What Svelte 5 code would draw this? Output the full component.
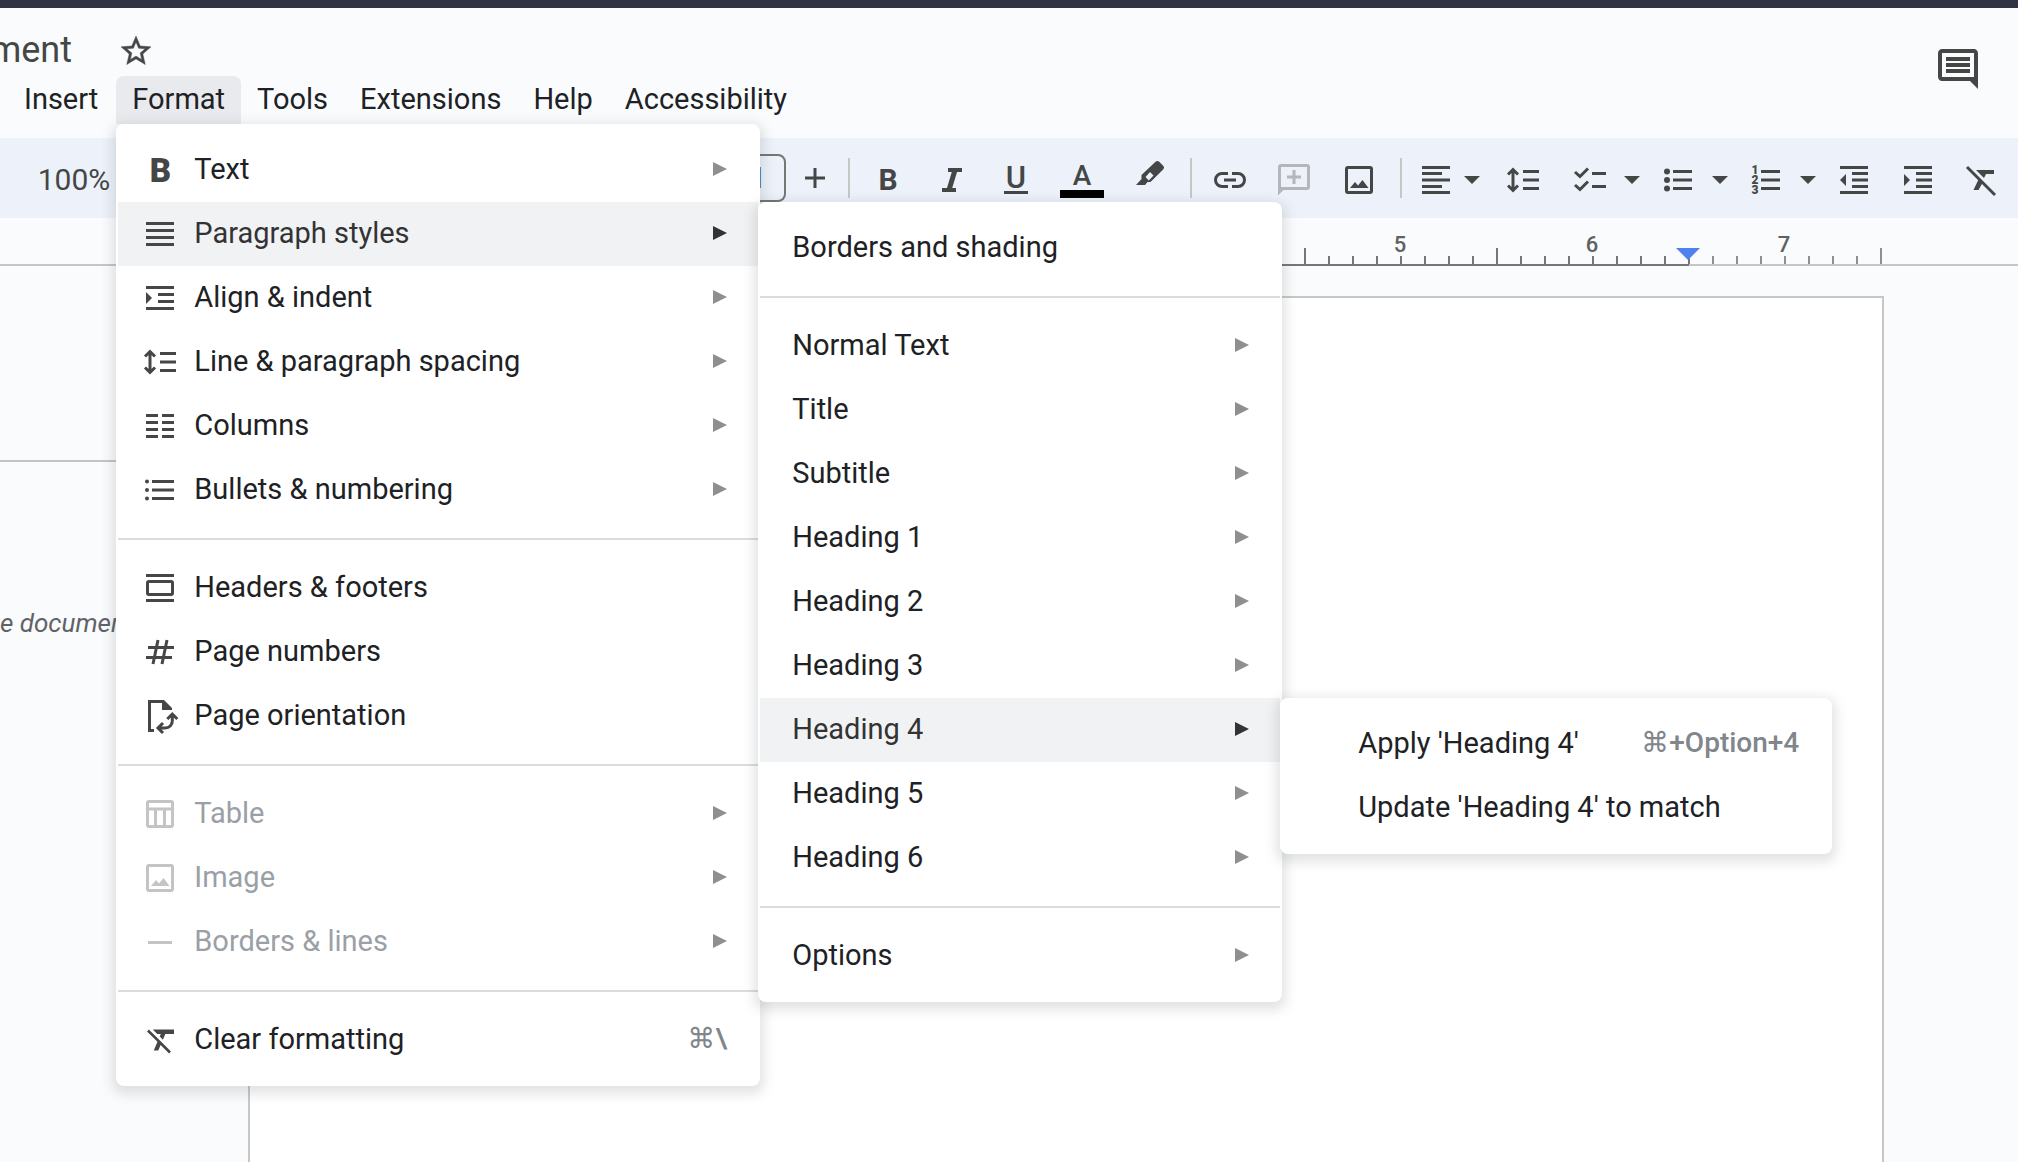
<script>
  const formatMenu = [
    { label: 'Text', icon: 'bold', arrow: true },
    { label: 'Paragraph styles', icon: 'paragraph', arrow: true, open: true },
    { label: 'Align & indent', icon: 'alignIndent', arrow: true },
    { label: 'Line & paragraph spacing', icon: 'spacing', arrow: true },
    { label: 'Columns', icon: 'columns', arrow: true },
    { label: 'Bullets & numbering', icon: 'bullets', arrow: true },
    null,
    { label: 'Headers & footers', icon: 'headers' },
    { label: 'Page numbers', icon: 'hash' },
    { label: 'Page orientation', icon: 'orientation' },
    null,
    { label: 'Table', icon: 'table', arrow: true, disabled: true },
    { label: 'Image', icon: 'image', arrow: true, disabled: true },
    { label: 'Borders & lines', icon: 'line', arrow: true, disabled: true },
    null,
    { label: 'Clear formatting', icon: 'clear', shortcut: '⌘\\' },
  ];

  const styleMenu = [
    { label: 'Borders and shading' },
    null,
    { label: 'Normal Text', arrow: true },
    { label: 'Title', arrow: true },
    { label: 'Subtitle', arrow: true },
    { label: 'Heading 1', arrow: true },
    { label: 'Heading 2', arrow: true },
    { label: 'Heading 3', arrow: true },
    { label: 'Heading 4', arrow: true, open: true },
    { label: 'Heading 5', arrow: true },
    { label: 'Heading 6', arrow: true },
    null,
    { label: 'Options', arrow: true },
  ];

  const headingMenu = [
    { label: "Apply 'Heading 4'", shortcut: '⌘+Option+4' },
    { label: "Update 'Heading 4' to match" },
  ];

  // Ruler: 192px to the inch, one tick each eighth, starting one inch left of zero.
  const ticks = Array.from({ length: 69 }, (_, i) => ({
    x: i * 24 + 1,
    half: i % 8 === 4,
    outside: i < 8 || i > 60,
  }));
  const inches = [5, 6, 7];
</script>

{#snippet arrow()}
  <svg class="arrow" width="14" height="14" viewBox="0 0 14 14" aria-hidden="true"><path d="M0 0l14 7-14 7z" /></svg>
{/snippet}

{#snippet caret()}
  <svg width="16" height="40" viewBox="0 0 16 40" aria-hidden="true"><path d="M0 18h16l-8 8z" fill="currentColor" /></svg>
{/snippet}

{#snippet menuIcon(name)}
  <svg class="line-icon" width="40" height="40" viewBox="0 0 40 40" aria-hidden="true">
    {#if name === 'bold'}
      <text class="black" x="20.5" y="32" font-size="33">B</text>
    {:else if name === 'paragraph'}
      <path d="M6 9.5h28M6 16.5h28M6 23.5h28M6 30.5h28" />
    {:else if name === 'alignIndent'}
      <path d="M6 9.5h28M18 16.5h16M18 23.5h16M6 30.5h28" />
      <path class="solid" d="M6 14l6 6-6 6z" />
    {:else if name === 'spacing'}
      <path d="M10 10v20M5 14.5l5-5 5 5M5 25.5l5 5 5-5M20 11.5h16M20 20h16M20 28.5h16" />
    {:else if name === 'columns'}
      <path d="M6 9.5h12M22 9.5h12M6 16.5h12M22 16.5h12M6 23.5h12M22 23.5h12M6 30.5h12M22 30.5h12" />
    {:else if name === 'bullets'}
      <path d="M12 11.5h22M12 20h22M12 28.5h22" />
      <g class="solid"><circle cx="7" cy="11.5" r="2" /><circle cx="7" cy="20" r="2" /><circle cx="7" cy="28.5" r="2" /></g>
    {:else if name === 'headers'}
      <path d="M6 7.5h28M6 32.5h28" />
      <rect x="7.5" y="13.5" width="25" height="13" rx="1.5" />
    {:else if name === 'hash'}
      <path d="M8 15.5h26M6 25.5h26M18 8l-5 24M27 8l-5 24" />
    {:else if name === 'orientation'}
      <path d="M14 34.5H9.5v-29H24M32.3 20v5a7 7 0 0 1-7 7H19M27.3 23l5-5 5 5M23 27l-5 5 5 5" />
      <path class="solid" d="M22 4h2l8 8v2H22z" />
    {:else if name === 'table'}
      <rect x="7.5" y="7.5" width="25" height="25" rx="1.5" />
      <path d="M7 15h26M15.5 15v18M24.5 15v18" />
    {:else if name === 'image'}
      <rect x="7.5" y="7.5" width="25" height="25" rx="1.5" />
      <path class="solid" d="M11 28l5-6 3 3.5 4.5-5.5 6 8z" />
    {:else if name === 'line'}
      <path d="M8 20.5h24" />
    {:else if name === 'clear'}
      <path class="solid" transform="translate(4 2) scale(1.5)" d="M3.27 5L2 6.27l6.97 6.97L6.5 19h3l1.57-3.66L16.73 21 18 19.73 3.55 5.27 3.27 5zM6 5v.18L8.82 8h2.4l-.72 1.68 2.1 2.1L14.21 8H20V5H6z" />
    {/if}
  </svg>
{/snippet}

{#snippet menu(items, level)}
  <ul class="menu level-{level}" role="menu">
    {#each items as item}
      {#if item}
        <li role="none">
          <button class="item" class:open={item.open} disabled={item.disabled} role="menuitem">
            {#if item.icon}{@render menuIcon(item.icon)}{/if}
            <span class="label">{item.label}</span>
            {#if item.shortcut}<span class="shortcut">{item.shortcut}</span>{/if}
            {#if item.arrow}{@render arrow()}{/if}
          </button>
          {#if item.open && level === 1}{@render menu(styleMenu, 2)}{/if}
          {#if item.open && level === 2}{@render menu(headingMenu, 3)}{/if}
        </li>
      {:else}
        <li class="separator" role="separator"></li>
      {/if}
    {/each}
  </ul>
{/snippet}

<div class="app">
  <header>
    <div class="heading">
      <div class="title-row">
        <div class="title"><span>ment</span></div>
        <button class="star" aria-label="Star">
          <svg width="36" height="36" viewBox="0 0 24 24"><path fill="currentColor" stroke="currentColor" stroke-width=".3" d="M22 9.24l-7.19-.62L12 2 9.19 8.63 2 9.24l5.46 4.73L5.82 21 12 17.27 18.18 21l-1.63-7.03L22 9.24zM12 15.4l-3.76 2.27 1-4.28-3.32-2.88 4.38-.38L12 6.1l1.71 4.04 4.38.38-3.32 2.88 1 4.28L12 15.4z" /></svg>
        </button>
      </div>
      <nav class="menubar">
        <button class="insert">Insert</button>
        <div class="menu-anchor">
          <button class="active">Format</button>
          {@render menu(formatMenu, 1)}
        </div>
        <button>Tools</button>
        <button>Extensions</button>
        <button>Help</button>
        <button>Accessibility</button>
      </nav>
    </div>
    <button class="comments" aria-label="Open comment history">
      <svg width="48" height="48" viewBox="0 0 24 24"><path fill="currentColor" d="M21.99 4c0-1.1-.89-2-1.99-2H4c-1.1 0-2 .9-2 2v12c0 1.1.9 2 2 2h14l4 4-.01-18zM20 4v12H4V4h16zM6 12h12v2H6zm0-3h12v2H6zm0-3h12v2H6z" /></svg>
    </button>
  </header>

  <div class="toolbar" role="toolbar" aria-label="Formatting">
    <button class="zoom">100%</button>
    <input class="size" aria-label="Font size" value="11" />
    <button class="plus" aria-label="Increase font size">
      <svg class="line-icon" width="20" height="40" viewBox="0 0 20 40"><path d="M0 20h20M10 10v20" /></svg>
    </button>
    <span class="divider"></span>
    <button class="tool" aria-label="Bold">
      <svg class="line-icon" width="40" height="40" viewBox="0 0 40 40"><text class="bold" x="20" y="32" font-size="30">B</text></svg>
    </button>
    <button class="tool" aria-label="Italic">
      <svg class="line-icon" width="40" height="40" viewBox="0 0 40 40"><path d="M16 12h14M10 32h14" stroke-width="4" /><path d="M23 12l-6 20" stroke-width="5" /></svg>
    </button>
    <button class="tool" aria-label="Underline">
      <svg class="line-icon" width="40" height="40" viewBox="0 0 40 40"><text class="medium" x="20" y="30" font-size="31">U</text><path d="M8 34.5h24" /></svg>
    </button>
    <button class="tool wide" aria-label="Text color">
      <svg class="line-icon" width="44" height="40" viewBox="0 0 44 40"><text class="medium" x="22" y="27" font-size="28">A</text><path class="swatch" d="M0 32h44v8H0z" /></svg>
    </button>
    <button class="tool wide" aria-label="Highlight color">
      <svg class="line-icon" width="40" height="40" viewBox="0 0 40 40"><path class="solid" fill-rule="evenodd" d="M25.8 3.6q1.6-1.4 3.2 0l4.4 4.4q1.4 1.6 0 3.2L20.5 24h-3L15 27H6l5.5-6v-4zM15.5 19l3.3 3.5 4.7-5-3.5-3.5z" /></svg>
    </button>
    <span class="divider"></span>
    <button class="tool" aria-label="Insert link">
      <svg class="line-icon" width="40" height="40" viewBox="0 0 40 40"><path d="M18 15.5h-6a6.5 6.5 0 0 0 0 13h6M22 15.5h6a6.5 6.5 0 0 1 0 13h-6M14 22h12" /></svg>
    </button>
    <button class="tool" aria-label="Add comment" disabled>
      <svg class="line-icon" width="40" height="40" viewBox="0 0 40 40"><rect x="5.5" y="7.5" width="29" height="23" rx="1.5" /><path d="M20 12v14M13 19h14" /><path class="solid" d="M4 29v8.5l7-7z" /></svg>
    </button>
    <button class="tool wide" aria-label="Insert image">
      <svg class="line-icon" width="40" height="40" viewBox="0 0 40 40"><rect x="6.5" y="9.5" width="25" height="25" rx="1.5" /><path class="solid" d="M10 30l5-6 3 3.5 4.5-5.5 6 8z" /></svg>
    </button>
    <span class="divider"></span>
    <div class="split align">
      <button aria-label="Align">
        <svg class="line-icon" width="40" height="40" viewBox="0 0 40 40"><path d="M6 9.5h28M6 15.5h20M6 22h28M6 28.5h20M6 34.5h28" /></svg>
      </button>
      <button class="more" aria-label="More alignment options">{@render caret()}</button>
    </div>
    <button class="tool wide" aria-label="Line and paragraph spacing">
      <svg class="line-icon" width="40" height="40" viewBox="0 0 40 40"><path d="M9 12v20M4 16.5l5-5 5 5M4 27.5l5 5 5-5M19 13.5h16M19 22h16M19 30.5h16" /></svg>
    </button>
    <div class="split">
      <button aria-label="Checklist">
        <svg class="line-icon" width="40" height="40" viewBox="0 0 40 40"><path d="M5 14l5 4.5 8-8M5 27l5 4.5 8-8M22 15.5h14M22 28.5h14" /></svg>
      </button>
      <button class="more" aria-label="More checklist options">{@render caret()}</button>
    </div>
    <div class="split">
      <button aria-label="Bulleted list">
        <svg class="line-icon" width="40" height="40" viewBox="0 0 40 40"><path d="M15 13.5h19M15 22h19M15 30.5h19" /><g class="solid"><circle cx="9" cy="13.5" r="3" /><circle cx="9" cy="22" r="3" /><circle cx="9" cy="30.5" r="3" /></g></svg>
      </button>
      <button class="more" aria-label="More bullet options">{@render caret()}</button>
    </div>
    <div class="split">
      <button aria-label="Numbered list">
        <svg class="line-icon" width="40" height="40" viewBox="0 0 40 40"><path d="M15 13.5h19M15 22h19M15 30.5h19" /><g class="black" font-size="12"><text x="9" y="16">1</text><text x="9" y="26">2</text><text x="9" y="36">3</text></g></svg>
      </button>
      <button class="more" aria-label="More numbering options">{@render caret()}</button>
    </div>
    <button class="tool" aria-label="Decrease indent">
      <svg class="line-icon" width="40" height="40" viewBox="0 0 40 40"><path d="M6 9.5h28M18 15.5h16M18 22h16M18 28.5h16M6 34.5h28" /><path class="solid" d="M12 16v12l-6-6z" /></svg>
    </button>
    <button class="tool" aria-label="Increase indent">
      <svg class="line-icon" width="40" height="40" viewBox="0 0 40 40"><path d="M6 9.5h28M18 15.5h16M18 22h16M18 28.5h16M6 34.5h28" /><path class="solid" d="M6 16v12l6-6z" /></svg>
    </button>
    <button class="tool" aria-label="Clear formatting">
      <svg class="line-icon" width="40" height="40" viewBox="0 0 40 40"><path d="M5 9l28 28" /><path class="solid" d="M14 12h18v4h-8l-2 4-6-6zM16.5 21.5l3.8 3.8-3.8 6.7h-5z" /></svg>
    </button>
  </div>

  <div class="ruler">
    <svg width="1770" height="48" viewBox="0 0 1770 48" aria-hidden="true">
      {#each ticks as tick}
        <path class:outside={tick.outside} d="M{tick.x} {tick.half ? 30 : 38}V46" />
      {/each}
      <path class="baseline" d="M193 47H1441" />
      <path class="marker" d="M1428 30h24l-12 12z" />
      {#each inches as inch}
        <text x={inch * 192 + 192} y="34">{inch}</text>
      {/each}
    </svg>
  </div>

  <main>
    <aside>
      <hr />
      <p>e documen</p>
    </aside>
    <section class="page" aria-label="Document page"></section>
  </main>
</div>

<style>
  :global(body) {
    margin: 0;
  }

  .app {
    display: flex;
    flex-direction: column;
    min-height: 100vh;
    box-sizing: border-box;
    overflow: hidden;
    border-top: 8px solid #303343;
    background: #fafbfd;
    color: #202124;
    font: 29px/32px Roboto, 'DejaVu Sans', sans-serif;
  }

  button {
    display: flex;
    flex: none;
    align-items: center;
    justify-content: center;
    margin: 0;
    padding: 0;
    border: 0;
    background: none;
    color: inherit;
    font: inherit;
    white-space: nowrap;
  }

  svg {
    display: block;
    flex: none;
  }

  /* Header */
  header {
    display: flex;
    justify-content: space-between;
    align-items: flex-start;
    height: 130px;
    padding-right: 36px;
  }

  .title-row {
    display: flex;
    align-items: center;
    gap: 46px;
    height: 68px;
    box-sizing: border-box;
    padding-top: 18px;
    color: #444746;
  }

  .title {
    display: flex;
    justify-content: flex-end;
    width: 72px;
    padding-bottom: 2px;
    overflow: hidden;
    font-size: 36px;
    line-height: 44px;
  }

  .menubar {
    display: flex;
    height: 48px;
    padding-left: 8px;
  }

  .menubar button {
    height: 48px;
    padding: 0 16px 2px;
  }

  .menubar .insert {
    padding-right: 18px;
  }

  .menu-anchor {
    position: relative;
  }

  .menubar .active {
    border-radius: 8px 8px 0 0;
    background: #e9eaee;
  }

  .comments {
    margin-top: 37px;
    color: #444746;
  }

  /* Menus */
  .menu {
    position: absolute;
    z-index: 2;
    margin: 0;
    padding: 14px 2px;
    border-radius: 8px;
    background: #fff;
    box-shadow: 0 4px 12px 4px rgba(60, 64, 67, 0.15);
    list-style: none;
  }

  .level-1 {
    top: 100%;
    left: 0;
    width: 640px;
  }

  .level-2 {
    top: 0;
    left: 100%;
    width: 520px;
  }

  .level-3 {
    top: 0;
    left: 100%;
    width: 548px;
  }

  .menu li {
    position: relative;
  }

  .menu .item {
    justify-content: flex-start;
    width: 100%;
    height: 64px;
    padding: 0 31px 0 32px;
  }

  .menu .level-3 .item {
    padding-left: 76px;
  }

  .level-1 > li > .item {
    padding-left: 22px;
  }

  .item .label {
    flex: 1;
    padding-bottom: 2px;
    text-align: left;
  }

  .item > svg + .label {
    padding-left: 14px;
  }

  .item.open {
    background: #f1f2f4;
    color: #333;
  }

  .item:disabled {
    color: #9aa0a6;
  }

  .item:disabled .line-icon {
    color: #c4c4c4;
  }

  .shortcut {
    padding-bottom: 2px;
    color: #80868b;
    font-size: 28px;
    font-weight: 500;
  }

  .arrow {
    padding-bottom: 2px;
    fill: #8f8f92;
  }

  .open .arrow {
    fill: #333;
  }

  .separator {
    height: 2px;
    margin: 16px 0;
    background: #dadce0;
  }

  /* Icons */
  .line-icon {
    fill: none;
    stroke: currentColor;
    stroke-width: 3;
    color: #444746;
  }

  .line-icon text,
  .line-icon .solid {
    fill: currentColor;
    stroke: none;
  }

  .line-icon text {
    font-family: Roboto, sans-serif;
    text-anchor: middle;
  }

  .line-icon .swatch {
    fill: #000;
    stroke: none;
  }

  .medium {
    font-weight: 500;
  }

  .bold {
    font-weight: 700;
  }

  .black {
    font-weight: 900;
  }

  /* Toolbar */
  .toolbar {
    display: flex;
    align-items: center;
    height: 80px;
    background: #edf2fa;
    color: #444746;
  }

  .zoom {
    width: 148px;
    padding-top: 4px;
    font-size: 30px;
  }

  .size {
    width: 72px;
    height: 48px;
    box-sizing: border-box;
    margin-left: 566px;
    padding: 0 18px;
    border: 2px solid #747775;
    border-radius: 8px;
    background: none;
    color: inherit;
    font: inherit;
  }

  .plus {
    width: 56px;
    padding-left: 2px;
    box-sizing: border-box;
  }

  .divider {
    flex: none;
    width: 2px;
    height: 40px;
    margin: 0 6px;
    background: #c7c7c7;
  }

  .tool {
    width: 64px;
    height: 64px;
  }

  .tool.wide {
    width: 68px;
  }

  .tool:disabled .line-icon {
    color: #b4b6ba;
  }

  .split {
    display: flex;
    flex: none;
    padding-right: 4px;
  }

  .split button {
    width: 64px;
  }

  .split .more {
    width: 20px;
  }

  .split.align {
    padding-right: 10px;
  }

  .split.align button {
    width: 56px;
  }

  .split.align .more {
    width: 16px;
  }

  /* Ruler */
  .ruler {
    height: 46px;
    padding-left: 248px;
    border-bottom: 2px solid #c4c7c5;
  }

  .ruler svg {
    fill: none;
    stroke: #747775;
    stroke-width: 2;
  }

  .ruler .outside {
    stroke: #8e918f;
  }

  .ruler .marker {
    fill: #4f82ee;
    stroke: none;
  }

  .ruler text {
    fill: #5f6161;
    stroke: none;
    font-size: 22px;
    font-weight: 500;
    text-anchor: middle;
  }

  /* Document area */
  main {
    display: flex;
    flex: 1;
    padding-right: 134px;
  }

  aside {
    width: 248px;
    flex: none;
    overflow: hidden;
    color: #5f6368;
  }

  aside hr {
    height: 2px;
    margin: 194px 0 145px;
    border: 0;
    background: #c4c4c4;
  }

  aside p {
    margin: 0;
    font-size: 26px;
    font-style: italic;
  }

  .page {
    flex: 1;
    margin-top: 30px;
    border: 2px solid #c7c7c7;
    border-bottom: 0;
    background: #fff;
  }
</style>
